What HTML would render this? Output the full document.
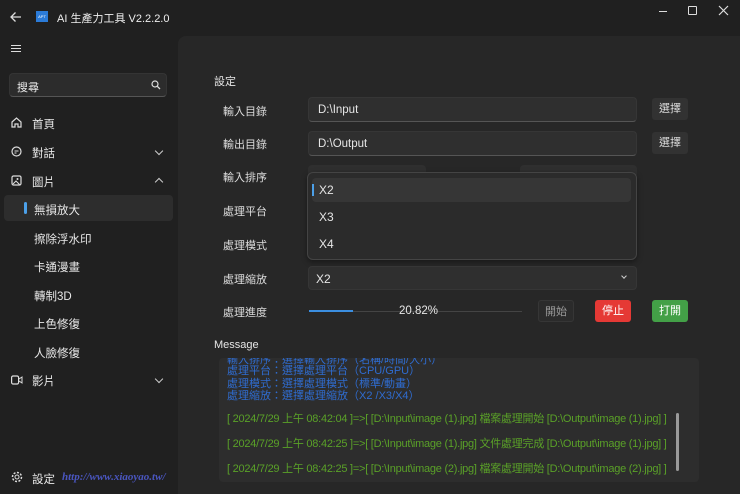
<!DOCTYPE html>
<html><head><meta charset="utf-8"><style>
*{margin:0;padding:0;box-sizing:border-box}
body{width:740px;height:494px;background:#202020;font-family:"Liberation Sans","Noto Sans CJK TC",sans-serif;color:#e6e6e6;position:relative;overflow:hidden;font-size:11.5px}
.a{position:absolute}
.content{left:178px;top:36px;width:562px;height:458px;background:#272727;border-top-left-radius:8px}
.nav{left:33px;font-size:11.5px;color:#e8e8e8}
.lbl{left:223px;font-size:11px;color:#ddd}
.inp{left:308px;width:329px;height:25px;background:#2f2f2f;border:1px solid #363636;border-bottom-color:#555;border-radius:4px;padding:6px 9px;font-size:11.5px}
.btn{width:36px;height:22px;background:#323232;border-radius:3px;font-size:11px;text-align:center;line-height:22px;color:#ddd}
.chev{width:6px;height:6px;border-right:1.2px solid #ccc;border-bottom:1.2px solid #ccc}
.blue{color:#2f6cd0;font-size:11px}
.green{color:#5aa128;font-size:11px;letter-spacing:-0.25px}
</style></head><body>
<div class="a content"></div>
<svg class="a" style="left:9px;top:10px" width="14" height="14" viewBox="0 0 14 14"><path d="M12 7H2M6.5 2.5L2 7l4.5 4.5" stroke="#ddd" stroke-width="1.3" fill="none"/></svg>
<div class="a" style="left:36px;top:11px;width:12px;height:11px;background:#2b7bd8;font-size:4px;color:#fff;text-align:center;line-height:11px">APT</div>
<div class="a" style="left:57px;top:10px;font-size:11px;color:#eee">AI 生產力工具 V2.2.2.0</div>
<div class="a" style="left:659px;top:11px;width:8px;height:1px;background:#ddd"></div>
<div class="a" style="left:688px;top:6px;width:9px;height:9px;border:1.2px solid #ddd;border-radius:1px"></div>
<svg class="a" style="left:718px;top:5px" width="11" height="11"><path d="M1 1l9 9M10 1l-9 9" stroke="#ddd" stroke-width="1.2"/></svg>
<div class="a" style="left:11px;top:45px;width:10px;height:1.2px;background:#ddd;box-shadow:0 3px 0 #ddd,0 6px 0 #ddd"></div>
<div class="a" style="left:9px;top:73px;width:158px;height:24px;background:#2c2c2c;border:1px solid #343434;border-bottom-color:#555;border-radius:4px;padding:5px 7px;font-size:11px">搜尋</div>
<svg class="a" style="left:151px;top:80px" width="10" height="10"><circle cx="4" cy="4" r="3" stroke="#ddd" stroke-width="1.2" fill="none"/><path d="M6.3 6.3L9 9" stroke="#ddd" stroke-width="1.3"/></svg>
<svg class="a" style="left:11px;top:117px" width="11" height="11"><path d="M1 5L5.5 1 10 5v5H7V7H4v3H1z" stroke="#ddd" stroke-width="1.2" fill="none"/></svg>
<div class="a nav" style="left:32px;top:116px">首頁</div>
<svg class="a" style="left:11px;top:146px" width="11" height="11"><circle cx="5.5" cy="5.5" r="4.5" stroke="#ddd" stroke-width="1.2" fill="none"/><path d="M3.5 5h4M3.5 7h2" stroke="#ddd"/></svg>
<div class="a nav" style="left:32px;top:145px">對話</div>
<div class="a chev" style="left:156px;top:148px;transform:rotate(45deg)"></div>
<svg class="a" style="left:11px;top:175px" width="11" height="11"><rect x="1" y="1" width="9" height="9" rx="1.5" stroke="#ddd" stroke-width="1.2" fill="none"/><circle cx="6.5" cy="4" r="1" fill="#ddd"/><path d="M2 9l3-3 4 4" stroke="#ddd" fill="none"/></svg>
<div class="a nav" style="left:32px;top:174px">圖片</div>
<div class="a chev" style="left:156px;top:179px;transform:rotate(225deg)"></div>
<div class="a" style="left:4px;top:195px;width:169px;height:26px;background:#2d2d2d;border-radius:4px"></div>
<div class="a" style="left:24px;top:202px;width:3px;height:12px;background:#4ca0e8;border-radius:2px"></div>
<div class="a nav" style="left:34px;top:202px">無損放大</div>
<div class="a nav" style="left:34px;top:231px">擦除浮水印</div>
<div class="a nav" style="left:34px;top:259px">卡通漫畫</div>
<div class="a nav" style="left:34px;top:288px">轉制3D</div>
<div class="a nav" style="left:34px;top:316px">上色修復</div>
<div class="a nav" style="left:34px;top:345px">人臉修復</div>
<svg class="a" style="left:11px;top:375px" width="12" height="10"><rect x="0.6" y="1" width="7" height="8" rx="1.5" stroke="#ddd" stroke-width="1.2" fill="none"/><path d="M8 4l3-2v6L8 6" stroke="#ddd" fill="none"/></svg>
<div class="a nav" style="left:32px;top:373px">影片</div>
<div class="a chev" style="left:156px;top:376px;transform:rotate(45deg)"></div>
<svg class="a" style="left:11px;top:471px" width="12" height="12"><circle cx="6" cy="6" r="2" stroke="#ddd" fill="none"/><circle cx="6" cy="6" r="4.5" stroke="#ddd" stroke-width="1.5" stroke-dasharray="2 1.5" fill="none"/></svg>
<div class="a nav" style="left:32px;top:471px">設定</div>
<div class="a" style="left:62px;top:471px;font-size:11px;color:#4a56c0;font-style:italic;font-weight:bold;font-family:'Liberation Serif',serif">http://www.xiaoyao.tw/</div>
<div class="a" style="left:214px;top:73px;font-size:11px">設定</div>
<div class="a lbl" style="top:103px">輸入目錄</div>
<div class="a lbl" style="top:136px">輸出目錄</div>
<div class="a lbl" style="top:169px">輸入排序</div>
<div class="a lbl" style="top:203px">處理平台</div>
<div class="a lbl" style="top:237px">處理模式</div>
<div class="a lbl" style="top:271px">處理縮放</div>
<div class="a lbl" style="top:304px">處理進度</div>
<div class="a inp" style="top:97px">D:\Input</div>
<div class="a inp" style="top:131px">D:\Output</div>
<div class="a btn" style="left:652px;top:98px">選擇</div>
<div class="a btn" style="left:652px;top:132px">選擇</div>
<div class="a" style="left:308px;top:165px;width:118px;height:10px;background:#2f2f2f;border-radius:4px 4px 0 0"></div>
<div class="a" style="left:520px;top:165px;width:117px;height:10px;background:#2f2f2f;border-radius:4px 4px 0 0"></div>
<div class="a" style="left:307px;top:172px;width:330px;height:88px;background:#2b2b2b;border:1px solid #444;border-radius:6px;box-shadow:0 2px 6px rgba(0,0,0,.4)"></div>
<div class="a" style="left:312px;top:178px;width:319px;height:24px;background:#363636;border-radius:4px"></div>
<div class="a" style="left:312px;top:184px;width:2px;height:12px;background:#4ca0e8"></div>
<div class="a" style="left:319px;top:183px;font-size:12px">X2</div>
<div class="a" style="left:319px;top:210px;font-size:12px">X3</div>
<div class="a" style="left:319px;top:237px;font-size:12px">X4</div>
<div class="a inp" style="top:266px;height:24px;border-bottom-color:#363636;padding:5px 7px;font-size:12px">X2</div>
<div class="a chev" style="left:622px;top:274px;width:4px;height:4px;transform:rotate(45deg)"></div>
<div class="a" style="left:309px;top:311px;width:213px;height:1px;background:#444"></div>
<div class="a" style="left:309px;top:310px;width:44px;height:2px;background:#3b8ee0"></div>
<div class="a" style="left:399px;top:305px;font-size:11.5px">20.82%</div>
<div class="a btn" style="left:538px;top:300px;background:#2b2b2b;border:1px solid #363636;color:#999">開始</div>
<div class="a btn" style="left:595px;top:300px;background:#e53935;color:#fff">停止</div>
<div class="a btn" style="left:652px;top:300px;background:#43a047;color:#fff">打開</div>
<div class="a" style="left:214px;top:339px;font-size:11px">Message</div>
<div class="a" style="left:219px;top:358px;width:480px;height:124px;background:#2d2d2d;border-radius:4px;overflow:hidden">
<div class="a blue" style="left:8px;top:-7px">輸入排序：選擇輸入排序（名稱/時間/大小）</div>
<div class="a blue" style="left:8px;top:4px">處理平台：選擇處理平台（CPU/GPU）</div>
<div class="a blue" style="left:8px;top:17px">處理模式：選擇處理模式（標準/動畫）</div>
<div class="a blue" style="left:8px;top:29px">處理縮放：選擇處理縮放（X2 /X3/X4）</div>
<div class="a green" style="left:8px;top:52px">[ 2024/7/29 上午 08:42:04 ]=>[ [D:\Input\image (1).jpg] 檔案處理開始 [D:\Output\image (1).jpg] ]</div>
<div class="a green" style="left:8px;top:77px">[ 2024/7/29 上午 08:42:25 ]=>[ [D:\Input\image (1).jpg] 文件處理完成 [D:\Output\image (1).jpg] ]</div>
<div class="a green" style="left:8px;top:102px">[ 2024/7/29 上午 08:42:25 ]=>[ [D:\Input\image (2).jpg] 檔案處理開始 [D:\Output\image (2).jpg] ]</div>
<div class="a" style="left:457px;top:55px;width:3px;height:58px;background:#999;border-radius:2px"></div>
</div>
</body></html>
